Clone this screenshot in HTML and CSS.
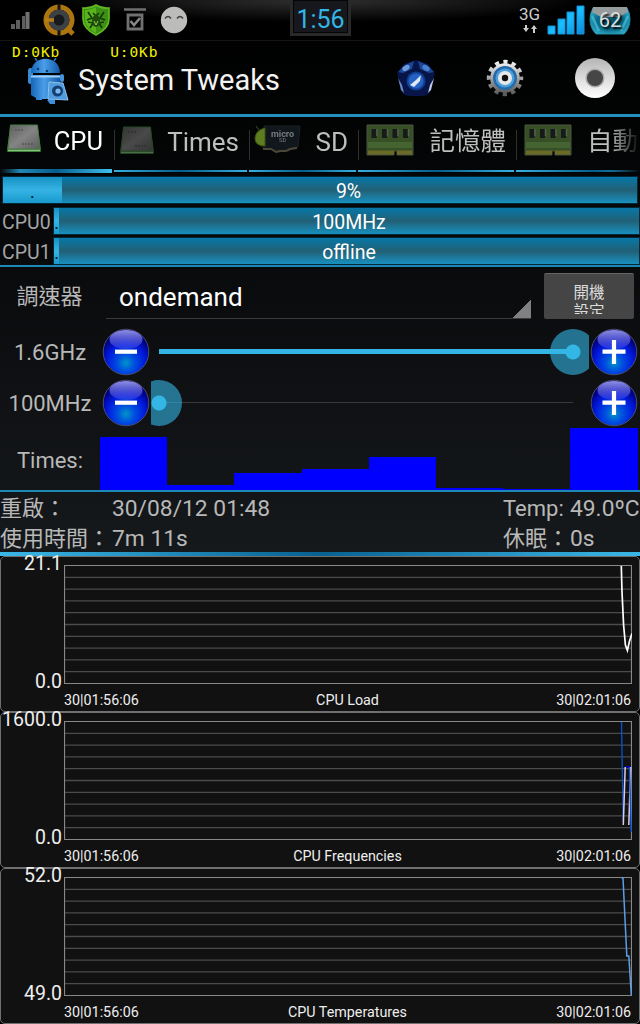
FILE: index.html
```html
<!DOCTYPE html>
<html lang="zh-Hant">
<head>
    <meta charset="UTF-8">
    <meta name="viewport" content="width=device-width, initial-scale=1.0">
    <title>System Tweaks</title>
    <link rel="stylesheet" href="styles.css">
</head>
<body>

    <!-- shared icons and gradients -->
    <svg class="defs" width="0" height="0">
        <defs>
            <radialGradient id="ball" cx="50%" cy="74%" r="62%">
                <stop offset="0" stop-color="#0094c8"/>
                <stop offset=".3" stop-color="#0050e0"/>
                <stop offset=".68" stop-color="#0018dc"/>
                <stop offset="1" stop-color="#00007c"/>
            </radialGradient>
            <linearGradient id="gloss" x1="0" y1="0" x2="0" y2="1">
                <stop offset="0" stop-color="#9090e4"/>
                <stop offset="1" stop-color="#4a50e8" stop-opacity=".4"/>
            </linearGradient>
            <linearGradient id="chip" x1="0" y1="0" x2="1" y2="1">
                <stop offset="0" stop-color="#5c5c5c"/>
                <stop offset=".5" stop-color="#848484"/>
                <stop offset="1" stop-color="#5c5c5c"/>
            </linearGradient>
            <linearGradient id="droid" x1="0" y1="0" x2="1" y2="0">
                <stop offset="0" stop-color="#1565b8"/>
                <stop offset=".45" stop-color="#4a9fe8"/>
                <stop offset="1" stop-color="#1058a8"/>
            </linearGradient>
            <linearGradient id="silver" x1="0" y1="0" x2="0" y2="1">
                <stop offset="0" stop-color="#b4b4b4"/>
                <stop offset=".5" stop-color="#dcdcdc"/>
                <stop offset="1" stop-color="#fff"/>
            </linearGradient>
            <linearGradient id="gear" x1="0" y1="0" x2="0" y2="1">
                <stop offset="0" stop-color="#f0f0f0"/>
                <stop offset="1" stop-color="#5c5c5c"/>
            </linearGradient>
            <linearGradient id="bars" x1="0" y1="0" x2="1" y2="1">
                <stop offset="0" stop-color="#0b75c0"/>
                <stop offset=".5" stop-color="#18c0ff"/>
                <stop offset="1" stop-color="#0c88d8"/>
            </linearGradient>
            <radialGradient id="batt" cx="50%" cy="50%" r="60%">
                <stop offset="0" stop-color="#075064"/>
                <stop offset=".55" stop-color="#0b6c88"/>
                <stop offset="1" stop-color="#35b5d4"/>
            </radialGradient>

            <symbol id="minus" viewBox="0 0 48 48">
                <circle cx="24" cy="24" r="22.800" fill="url(#ball)" stroke="#4c4c6c" stroke-width="1"/>
                <ellipse cx="24" cy="11.500" rx="16.500" ry="9.500" fill="url(#gloss)"/>
                <path d="M13 23.700h22" stroke="#fff" stroke-width="4.200"/>
            </symbol>
            <symbol id="plus" viewBox="0 0 48 48">
                <circle cx="24" cy="24" r="22.800" fill="url(#ball)" stroke="#4c4c6c" stroke-width="1"/>
                <ellipse cx="24" cy="11.500" rx="16.500" ry="9.500" fill="url(#gloss)"/>
                <path d="M12.500 23.700h23M24 12v24" stroke="#fff" stroke-width="4.200"/>
            </symbol>
            <symbol id="cpu" viewBox="0 0 34 28">
                <path d="M3.500 1h27l3.500 24v3H0v-3z" fill="#2f652f"/>
                <path d="M3.500 1h27l2.500 24H1z" fill="url(#chip)" stroke="#477c43"/>
                <path d="M1 26.500h32" stroke="#86c47c" stroke-width="1.500"/>
                <path d="M8 6h8M15 20h12" stroke="#555" stroke-width="1.600" stroke-dasharray="2 1"/>
            </symbol>
            <symbol id="ram" viewBox="0 0 48 32">
                <path d="M1 1h46v30H31v-4h-3v4H1z" fill="#364f25" stroke="#4a5640"/>
                <path d="M2 18h44v6H2z" fill="#466431"/>
                <path d="M2 28.500h26M31 28.500h15" stroke="#6c6a28" stroke-width="4"/>
                <path d="M5.500 5h5v9h-5zM16 5h5v9h-5zM26.500 5h5v9h-5zM37 5h5v9h-5z" fill="#171a1a"/>
                <path d="M11 5v7M21.500 5v7M32 5v7M42.500 5v7" stroke="#56604f" stroke-width="1.500"/>
            </symbol>
            <symbol id="grid" viewBox="0 0 568 119" preserveAspectRatio="none">
                <path d="M0 12.300h568M0 24.100h568M0 35.900h568M0 47.700h568M0 59.500h568M0 71.300h568M0 83.100h568M0 94.900h568M0 106.700h568" stroke="#4b4b4b" stroke-width="1.300"/>
                <path d="M.5.500h567v118H.5z" fill="none" stroke="#888" stroke-width="1.200"/>
            </symbol>
        </defs>
    </svg>

    <div class="statusbar">
        <div class="notifications">
            <svg width="20" height="20" viewBox="0 0 20 20"><path d="M1 14h4v5H1zM6 10h4v9H6zM12 6h3v13h-3z" fill="#5e5e5e"/><path d="M15.500 2h4v17h-4z" fill="#707070"/></svg>
            <svg class="quick" width="32" height="32" viewBox="0 0 32 32">
                <circle cx="16" cy="16" r="13" fill="none" stroke="#ad7510" stroke-width="5"/>
                <path d="M23 23l7 7" stroke="#ad7510" stroke-width="5"/>
                <path d="M16 0v6M16 26v6" stroke="#151515" stroke-width="3"/>
                <circle cx="16" cy="16" r="10.500" fill="#3d4146"/><circle cx="16" cy="16" r="5.500" fill="#17191b"/>
                <path d="M2 16h9" stroke="#b87d14" stroke-width="3.500"/>
            </svg>
            <svg class="shield" width="28" height="32" viewBox="0 0 28 32">
                <path d="M14 1c3 2 8 3.500 13 3v11c0 7-5 12-13 16C6 27 1 22 1 15V4c5 .5 10-1 13-3z" fill="#3c9012" stroke="#62b823" stroke-width="1.600"/>
                <path d="M14 3v26C7 25 3 21 3 15V6c4 0 8-1 11-3z" fill="#59b41b"/>
                <path d="M6 8l4 6-5 2M8 24l3-5-5-1M22 8l-4 6 5 2M20 24l-3-5 5-1M11 9l3 3 3-3" fill="none" stroke="#163d08" stroke-width="1.700"/>
                <ellipse cx="14" cy="17" rx="4" ry="6" fill="#204b0c"/><path d="M12 17l2 4 2-4" stroke="#8cd84c" fill="none"/>
            </svg>
            <svg class="task" width="22" height="24" viewBox="0 0 22 24"><path d="M0 1.500h22" stroke="#707070" stroke-width="2.500"/><path d="M4 7h14v14H4z" fill="none" stroke="#707070" stroke-width="2.800"/><path d="M6.500 13l3.500 4 6-7" fill="none" stroke="#888" stroke-width="2.500"/></svg>
            <svg class="smile" width="28" height="28" viewBox="0 0 28 28"><circle cx="14" cy="14" r="13.200" fill="#bcbcba"/><path d="M5 12.500q3-4 6 0M17 12.500q3-4 6 0" fill="none" stroke="#404040" stroke-width="1.400"/></svg>
        </div>
        <div class="clock">1:56</div>
        <div class="system">
            <div class="network">
                <span>3G</span>
                <svg width="14" height="8" viewBox="0 0 14 8"><path d="M2 0h2v3h2L3 7 0 3h2zM10 8h2V4h2l-3-4-3 4h2z" fill="#ccc"/></svg>
            </div>
            <svg class="signal" width="38" height="30" viewBox="0 0 38 30"><path d="M1 21h7v8H1zM11 14h7v15h-7zM20 7h7v22h-7zM30 1h7v28h-7z" fill="url(#bars)" stroke="#1791dc"/></svg>
            <div class="battery">
                <svg width="42" height="30" viewBox="0 0 42 30"><path d="M4 2h34q3 5 3 11 0 9-6 15H7q-6-6-6-15 0-6 3-11z" fill="url(#batt)" stroke="#208ca8"/><path d="M4 1h34l1 5-9 5H12L3 6z" fill="#969c9e"/><path d="M3 10l7 15M39 10l-7 15" stroke="#51cbe4" stroke-width="2.500" opacity=".6"/></svg>
                <span>62</span>
            </div>
        </div>
    </div>

    <div class="header">
        <div class="traffic"><span>D:0Kb</span><span>U:0Kb</span></div>
        <svg class="app-icon" width="42" height="46" viewBox="0 0 42 46">
            <path d="M10 3L8 0M27 3l2-3" stroke="#2b7dc8" stroke-width="1.500"/>
            <rect x="1" y="10" width="5" height="16" rx="2.500" fill="#3b8ad0"/>
            <path d="M4 15C4-4 33-4 33 15z" fill="url(#droid)"/>
            <path d="M4 17h29v21q0 3-3 3h-3v2h-6v-2h-6v1H9v-2l-5-3z" fill="url(#droid)"/>
            <path d="M4 18.500h29" stroke="#9fcdf5" stroke-width="2"/>
            <circle cx="11" cy="11" r="1.300" fill="#123c70"/><circle cx="20" cy="13" r="1.300" fill="#123c70"/>
            <rect x="33" y="16" width="4" height="8" rx="2" fill="#4394dc"/>
            <path d="M22 24l14 1 5 17-20-1z" fill="#539ce0" stroke="#8cc0ee"/>
            <circle cx="30.500" cy="33" r="5.500" fill="#123e70"/><circle cx="31" cy="33" r="2.600" fill="#7cb8ee"/>
            <path d="M20 42h8v4h-5z" fill="#3d8edb"/>
        </svg>
        <h1>System Tweaks</h1>
        <svg class="dodeca" width="38" height="38" viewBox="0 0 38 38">
            <path d="M19 1l12 4 7 9-6 21-5 2H11l-5-2L0 14l7-9z" fill="#071548"/>
            <path d="M8 6l9-4-2 8-9 4-5-1zM30 6l-9-4 2 8 9 4 5-1z" fill="#1b4696"/>
            <ellipse cx="9" cy="9" rx="4" ry="2.500" fill="#6a9ada" transform="rotate(-30 9 9)"/>
            <ellipse cx="29" cy="9" rx="4" ry="2.500" fill="#477fce" transform="rotate(30 29 9)"/>
            <path d="M1 19l4 7 2 8-3-3z" fill="#6d88c8"/>
            <path d="M37 19l-4 7-2 8 3-3z" fill="#c0cae8"/>
            <circle cx="19" cy="22" r="9.500" fill="#123f94"/><circle cx="19" cy="22" r="7.500" fill="#2562c4"/>
            <path d="M13 26l6-5 5-5-1 6-6 6z" fill="#e0e8f4"/>
        </svg>
        <svg class="gear" width="38" height="38" viewBox="0 0 38 38">
            <circle cx="19" cy="19" r="16.200" fill="none" stroke="url(#gear)" stroke-width="4" stroke-dasharray="4.240 4.240" stroke-dashoffset="2.120"/>
            <circle cx="19" cy="19" r="14.800" fill="url(#gear)"/>
            <circle cx="19" cy="19" r="12" fill="#2469aa"/><circle cx="19" cy="19" r="9.500" fill="#4ba0dc"/>
            <circle cx="19" cy="19" r="7" fill="#e8e8e8"/><circle cx="19" cy="19" r="3.200" fill="#111"/>
        </svg>
        <svg class="record" width="42" height="42" viewBox="0 0 42 42"><circle cx="21" cy="21" r="20" fill="url(#silver)"/><circle cx="21" cy="21" r="8.800" fill="#464646" stroke="#aaa" stroke-width="1.500"/></svg>
    </div>

    <div class="tabs">
        <div class="tab tab-cpu active"><svg width="34" height="28"><use href="#cpu"/></svg><span>CPU</span></div>
        <div class="tab tab-times"><svg class="dim" width="34" height="28"><use href="#cpu"/></svg><span>Times</span></div>
        <div class="tab tab-sd">
            <svg width="47" height="28" viewBox="0 0 47 28">
                <path d="M10 1h35q2 0 1 2l-2 19-6 1-3 3-7-1-3 2-6-3H10l-3-4z" fill="#10171d" stroke="#1c2022"/>
                <path d="M9 24h8l5 3 4-1h6l4-2 7-1" stroke="#4b4737" stroke-width="2" fill="none"/>
                <path d="M11 3v18Q1 21 1 13 2 5 11 3zM5 5L2 1" fill="#5d7d20" stroke="#3f5915"/>
                <text x="17" y="12" class="sd-text">micro</text><text x="25" y="17" class="sd-small">SD</text>
            </svg><span>SD</span>
        </div>
        <div class="tab tab-mem"><svg width="48" height="32"><use href="#ram"/></svg><span>記憶體</span></div>
        <div class="tab tab-auto"><svg width="48" height="32"><use href="#ram"/></svg><span>自動</span></div>
    </div>

    <div class="loads">
        <div class="load total"><div class="bar"><i style="width: 9.3%">.</i><b>9%</b></div></div>
        <div class="load"><label>CPU0</label><div class="bar"><i style="width: 5px">.</i><b>100MHz</b></div></div>
        <div class="load"><label>CPU1</label><div class="bar"><i style="width: 5px">.</i><b>offline</b></div></div>
    </div>

    <div class="settings">
        <div class="governor">
            <label>調速器</label>
            <div class="spinner">ondemand</div>
            <button><span>開機<br>設定</span></button>
        </div>
        <div class="freq">
            <label>1.6GHz</label>
            <svg width="48" height="48"><use href="#minus"/></svg>
            <div class="seek max"><div class="track"></div><div class="thumb"></div></div>
            <svg width="48" height="48"><use href="#plus"/></svg>
        </div>
        <div class="freq">
            <label>100MHz</label>
            <svg width="48" height="48"><use href="#minus"/></svg>
            <div class="seek min"><div class="track"></div><div class="thumb"></div></div>
            <svg width="48" height="48"><use href="#plus"/></svg>
        </div>
        <div class="times">
            <label>Times:</label>
            <div class="histogram">
                <i style="height: 53px"></i>
                <i style="height: 5px"></i>
                <i style="height: 17px"></i>
                <i style="height: 21px"></i>
                <i style="height: 33px"></i>
                <i style="height: 2px"></i>
                <i style="height: 1px"></i>
                <i style="height: 62px"></i>
            </div>
        </div>
    </div>

    <div class="info">
        <span>重啟：</span><span class="value">30/08/12 01:48</span><span>Temp:</span><span class="value">49.0ºC</span>
        <span>使用時間：</span><span class="value">7m 11s</span><span>休眠：</span><span class="value">0s</span>
    </div>

    <div class="chart">
        <div class="scale"><span>21.1</span><span>0.0</span></div>
        <svg class="plot" width="568" height="119" viewBox="0 0 568 119">
            <use href="#grid" width="568" height="119"/>
            <path d="M557.300 1l.7 26 1.600 33 1.800 20 2 5.500 2-9 2.600-8" fill="none" stroke="#fff" stroke-width="1.700"/>
        </svg>
        <div class="axis"><span>30|01:56:06</span><span>CPU Load</span><span>30|02:01:06</span></div>
    </div>
    <div class="chart">
        <div class="scale"><span>1600.0</span><span>0.0</span></div>
        <svg class="plot" width="568" height="119" viewBox="0 0 568 119">
            <use href="#grid" width="568" height="119"/>
            <path d="M557.500 1l1.700 100" fill="none" stroke="#0850c4" stroke-width="1.400"/>
            <path d="M561 46h5.500" stroke="#0000e0" stroke-width="1.500"/>
            <path d="M559.300 104l1.900-58M564.800 104l1.900-58" stroke="#dccbe8" stroke-width="1.500"/>
            <path d="M565.500 46l1.700 65" stroke="#0850d8" stroke-width="1.400"/>
        </svg>
        <div class="axis"><span>30|01:56:06</span><span>CPU Frequencies</span><span>30|02:01:06</span></div>
    </div>
    <div class="chart">
        <div class="scale"><span>52.0</span><span>49.0</span></div>
        <svg class="plot" width="568" height="119" viewBox="0 0 568 119">
            <use href="#grid" width="568" height="119"/>
            <path d="M557.500 1h1.500l3.800 78h2l2.500 39" fill="none" stroke="#5b9de6" stroke-width="1.500"/>
        </svg>
        <div class="axis"><span>30|01:56:06</span><span>CPU Temperatures</span><span>30|02:01:06</span></div>
    </div>

</body>
</html>
```

FILE: styles.css
```css
* {
    box-sizing: border-box;
}
body {
    margin: 0;
    width: 640px;
    height: 1024px;
    overflow: hidden;
    background: #000 linear-gradient(#000 0, #020303 120px, #08090b 240px, #16191c 555px) no-repeat;
    background-size: 640px 555px;
    color: #b8b8b8;
    font-family: Roboto, "Noto Sans CJK TC", sans-serif;
    font-size: 22px;
}
svg {
    display: block;
    flex: none;
}
.defs {
    position: absolute;
}

/* status bar */
.statusbar {
    display: flex;
    justify-content: space-between;
    height: 41px;
    border-bottom: 1px solid #141414;
    background: radial-gradient(ellipse 270px 22px at 50% 0, #303030, #000);
}
.notifications {
    display: flex;
    align-items: center;
    width: 290px;
    padding-left: 10px;
}
.quick {
    margin-left: 13px;
}
.shield {
    margin-left: 7px;
}
.task {
    margin-left: 14px;
}
.smile {
    margin-left: 14px;
}
.clock {
    width: 62px;
    height: 36px;
    border: 3px solid #292929;
    border-top: 0;
    background: #16181d;
    box-shadow: inset 0 0 0 1px #050505;
    color: #33b5e5;
    font-size: 25px;
    line-height: 40px;
    text-align: center;
}
.system {
    display: flex;
    width: 289px;
    justify-content: flex-end;
    padding: 5px 9px 0 0;
}
.network {
    width: 22px;
    margin-right: 6px;
    color: #ccc;
    font-size: 17px;
    line-height: 19px;
}
.network svg {
    margin: 1px 0 0 4px;
}
.battery {
    display: grid;
    margin-left: 4px;
    place-items: center;
    color: #ddd;
    font-size: 20px;
    line-height: 31px;
    height: 30px;
}
.battery svg, .battery span {
    grid-area: 1 / 1;
}
.battery span {
    z-index: 1;
    text-shadow: 2px 2px 2px #000;
}

/* title */
.header {
    position: relative;
    display: flex;
    align-items: center;
    height: 76px;
    padding: 0 24px 0 27px;
    border-bottom: 3px solid #2590c0;
}
.traffic {
    position: absolute;
    top: 2px;
    left: 12px;
    display: flex;
    gap: 50px;
    color: #f2f200;
    font-family: "DejaVu Sans Mono", monospace;
    font-size: 14.5px;
    line-height: 19px;
    letter-spacing: .9px;
}
.app-icon {
    margin-top: 6px;
}
h1 {
    margin: 5px auto 0 9px;
    color: #f3f3f3;
    font-size: 29px;
    font-weight: 400;
}
.gear {
    margin: 0 50px 0 51px;
}
.record {
    margin-top: 1px;
}

/* tabs */
.tabs {
    display: flex;
    gap: 2px;
    width: 640px;
    height: 56px;
    overflow: hidden;
    mask-image: linear-gradient(90deg, #000 610px, transparent);
}
.tab {
    display: flex;
    flex: none;
    align-items: flex-start;
    justify-content: space-between;
    height: 55px;
    padding: 8px 10px 0 5px;
    background: linear-gradient(90deg, #35afe0, #075d8c 50%, #35afe0) 0 53px / 100% 2px no-repeat,
        linear-gradient(#303030, #303030) 0 13px / 1px 30px no-repeat;
    color: #bebebe;
    font-size: 26px;
    line-height: 34px;
}
.tab-cpu {
    width: 112px;
    padding: 7px 9px 0 7px;
    background: linear-gradient(90deg, transparent, #2187b5 18%, #075d8c 50%, #3fc0f0) 0 52px / 100% 4px no-repeat;
    height: 56px;
    color: #fff;
    font-size: 25.5px;
    line-height: 34px;
}
.tab-times {
    width: 133px;
    padding-left: 6px;
    padding-right: 8px;
}
.tab-sd {
    width: 107px;
    padding-right: 8px;
}
.tab-mem, .tab-auto {
    width: 156px;
    padding: 7px 8px 0;
}
.tab-mem span, .tab-auto span {
    font-size: 25.5px;
    line-height: 35px;
}
.tab-auto {
    justify-content: flex-start;
    gap: 15px;
}
.dim {
    opacity: .55;
    margin-top: 1px;
}
.sd-text {
    fill: #747b7c;
    font-size: 9px;
    font-weight: 700;
}
.sd-small {
    fill: #747b7c;
    font-size: 6px;
}

/* load bars */
.loads {
    height: 94px;
    padding-top: 4px;
    border-bottom: 2px solid #1d87b5;
}
.load {
    display: flex;
    align-items: center;
    height: 26px;
    margin: 0 1px 4px 0;
}
.load label {
    width: 54px;
    padding: 2px 0 0 2px;
    font-size: 19.5px;
    color: #a5a5a5;
}
.load.total {
    margin: 0 3px 5px;
}
.bar {
    display: grid;
    flex: 1;
    height: 26px;
    background: linear-gradient(#0777a8, #216075 50%, #1890c0);
    box-shadow: 0 0 0 1px #052838;
    line-height: 29px;
}
.bar i, .bar b {
    grid-area: 1 / 1;
    height: 26px;
    font-style: normal;
    font-weight: 400;
}
.bar i {
    background: linear-gradient(#1791c3, #35b4e4 50%, #1898cd);
    color: #00141e;
    font-size: 18px;
    text-align: center;
}
.bar b {
    padding-left: 5px;
    color: #fff;
    font-size: 19.5px;
    text-align: center;
}
.total b {
    padding-left: 57px;
}

/* governor and frequencies */
.settings {
    height: 225px;
    border-bottom: 2px solid #1d87b5;
}
.settings label {
    flex: none;
    width: 102px;
    text-align: center;
}
.governor {
    display: flex;
    height: 59px;
    padding-top: 6px;
}
.governor .spinner {
    width: 425px;
    height: 46px;
    padding-left: 13px;
    border-bottom: 1px solid #3b3b3d;
    background: linear-gradient(135deg, transparent 50%, #808080 50%) right bottom / 19px 19px no-repeat;
    color: #fff;
    font-size: 26px;
    line-height: 49px;
}
.governor label {
    width: 106px;
    padding-right: 7px;
    line-height: 48px;
}
button {
    width: 90px;
    height: 46px;
    margin-left: 13px;
    padding: 9px 0 5px;
    border: 0;
    border-top: 1px solid #666;
    border-radius: 2px;
    background: #454545;
    color: #ddd;
    font: 15.5px/19px Roboto, "Noto Sans CJK TC", sans-serif;
}
button span {
    display: block;
    height: 30px;
    overflow: hidden;
}
.freq {
    display: flex;
    align-items: center;
    height: 51px;
}
.freq label {
    padding: 2px 2px 0 0;
}
.seek {
    display: flex;
    align-items: center;
    width: 438px;
    height: 46px;
    margin: 0 1px;
    overflow: hidden;
}
.track {
    flex: none;
    width: 414px;
    margin-left: 8px;
    height: 1px;
    background: #38393b;
}
.max .track {
    height: 5px;
    background: #33b5e5;
}
.thumb {
    flex: none;
    width: 46px;
    height: 46px;
    margin-left: -23px;
    border-radius: 50%;
    background: radial-gradient(circle, #33b5e5 7px, rgba(51, 181, 229, .6) 8px);
}
.min .thumb {
    margin-left: -437px;
}
.times {
    display: flex;
    height: 62px;
    line-height: 66px;
}
.times label {
    width: 100px;
}
.histogram {
    display: flex;
    align-items: flex-end;
    width: 537.5px;
}
.histogram i {
    flex: 1;
    background: #00f;
}

/* uptime */
.info {
    display: grid;
    grid-template-columns: 112px 391px 67px auto;
    grid-auto-rows: 30px;
    height: 64px;
    padding-top: 2px;
    border-bottom: 4px solid;
    border-image: linear-gradient(90deg, #3bb8e8, #076191 50%, #3bb8e8) 1;
    line-height: 30px;
    white-space: nowrap;
}
.value {
    font-size: 22.8px;
}

/* charts */
.chart {
    display: grid;
    grid-template-columns: 62px 568px;
    grid-template-rows: 119px 24px;
    column-gap: 1px;
    height: 156px;
    padding-top: 8px;
    border: 1px solid #707070;
    border-radius: 5px;
    background: #111;
    color: #eee;
}
.scale {
    display: flex;
    flex-direction: column;
    justify-content: space-between;
    margin: -10px 1px -7px -5px;
    font-size: 19.5px;
    line-height: 18px;
    text-align: right;
}
.axis {
    display: flex;
    grid-column: 2;
    justify-content: space-between;
    padding: 7px 1px 0 0;
    font-size: 14.3px;
    line-height: 18px;
}
```
